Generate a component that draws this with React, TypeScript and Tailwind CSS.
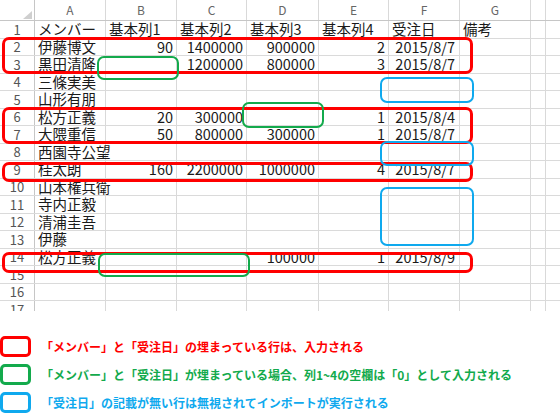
import React from 'react';

const COLS = ['A', 'B', 'C', 'D', 'E', 'F', 'G', ''];
// px widths: row header, A..G, partial H
const WIDTHS = ['w-[35px]', 'w-[71px]', 'w-[71px]', 'w-[70px]', 'w-[72px]', 'w-[70px]', 'w-[71px]', 'w-[71px]', 'w-[15px]'];

type Row = string[];

const ROWS: Row[] = [
  ['メンバー', '基本列1', '基本列2', '基本列3', '基本列4', '受注日', '備考'],
  ['伊藤博文', '90', '1400000', '900000', '2', '2015/8/7'],
  ['黒田清隆', '', '1200000', '800000', '3', '2015/8/7'],
  ['三條実美'],
  ['山形有朋'],
  ['松方正義', '20', '300000', '', '1', '2015/8/4'],
  ['大隈重信', '50', '800000', '300000', '1', '2015/8/7'],
  ['西園寺公望'],
  ['桂太朗', '160', '2200000', '1000000', '4', '2015/8/7'],
  ['山本権兵衛'],
  ['寺内正毅'],
  ['清浦圭吾'],
  ['伊藤'],
  ['松方正義', '', '', '100000', '1', '2015/8/9'],
  [],
  [],
  [],
];

// overlays drawn over the sheet: [left, top, width, height, kind]
const BOXES: { cls: string }[] = [
  { cls: 'left-[2px] top-[37px] w-[471px] h-[37px] border-[3px] border-[#ff0000]' },
  { cls: 'left-[2px] top-[107px] w-[471px] h-[37px] border-[3px] border-[#ff0000]' },
  { cls: 'left-[2px] top-[162px] w-[471px] h-[20px] border-[3px] border-[#ff0000]' },
  { cls: 'left-[2px] top-[252px] w-[471px] h-[21px] border-[3px] border-[#ff0000]' },
  { cls: 'left-[97px] top-[56px] w-[82px] h-[24px] border-[2.5px] border-[#13aa4c]' },
  { cls: 'left-[242px] top-[102px] w-[82px] h-[26px] border-[2.5px] border-[#13aa4c]' },
  { cls: 'left-[98px] top-[253px] w-[152px] h-[24px] border-[2.5px] border-[#13aa4c]' },
  { cls: 'left-[380px] top-[77px] w-[94px] h-[26px] border-[2.5px] border-[#0fa9ee]' },
  { cls: 'left-[380px] top-[141px] w-[94px] h-[25px] border-[2.5px] border-[#0fa9ee]' },
  { cls: 'left-[380px] top-[187px] w-[94px] h-[59px] border-[2.5px] border-[#0fa9ee]' },
];

const LEGEND = [
  { box: 'border-[#ff0000]', text: 'text-[#ff0000]', label: '「メンバー」と「受注日」の埋まっている行は、入力される' },
  { box: 'border-[#13aa4c]', text: 'text-[#13aa4c]', label: '「メンバー」と「受注日」が埋まっている場合、列1~4の空欄は「0」として入力される' },
  { box: 'border-[#0fa9ee]', text: 'text-[#0fa9ee]', label: '「受注日」の記載が無い行は無視されてインポートが実行される' },
];

function Cell({ value, col, header }: { value?: string; col: number; header: boolean }) {
  const numeric = !header && col >= 1 && col <= 5;
  return (
    <div
      className={`${WIDTHS[col + 1]} shrink-0 h-full border-r border-[#d9d9d9] px-[3px] flex items-center whitespace-nowrap ${
        numeric ? 'justify-end' : 'justify-start'
      } ${col === 5 && !header ? 'justify-end pr-[4px]' : ''}`}
    >
      {value}
    </div>
  );
}

export default function App() {
  return (
    <div
      className="w-[560px] h-[420px] bg-white relative overflow-hidden"
      style={{ fontFamily: '"Noto Sans CJK JP", "Liberation Sans", sans-serif' }}
    >
      {/* sheet */}
      <div className="h-[311px] overflow-hidden">
        {/* column headers */}
        <div className="flex h-[21px] border-b border-[#c6c6c6] text-[12px] text-[#666]">
          <div className="w-[35px] shrink-0 h-full border-r border-[#c6c6c6] relative">
            <svg className="absolute left-[23px] top-[11px]" width="9" height="8" viewBox="0 0 9 8">
              <polygon points="9,0 9,8 0,8" fill="#cfcfcf" />
            </svg>
          </div>
          {COLS.map((c, i) => (
            <div key={i} className={`${WIDTHS[i + 1]} shrink-0 h-full border-r border-[#d9d9d9] flex items-center justify-center`}>
              {c}
            </div>
          ))}
        </div>
        {ROWS.map((row, r) => (
          <div key={r} className="flex h-[17.5px] border-b border-[#dadada] text-[14.5px] text-[#1a1a1a] leading-none">
            <div className="w-[35px] shrink-0 h-full border-r border-[#c6c6c6] flex items-center justify-center text-[13px] text-[#555]">
              {r + 1}
            </div>
            {COLS.map((_, i) => (
              <Cell key={i} col={i} value={row[i]} header={r === 0} />
            ))}
          </div>
        ))}
      </div>

      {BOXES.map((b, i) => (
        <div key={i} className={`absolute rounded-[7px] ${b.cls}`} />
      ))}

      {/* legend */}
      <div className="absolute left-0 top-[336px] flex flex-col gap-[7px]">
        {LEGEND.map((l, i) => (
          <div key={i} className="flex items-center gap-[10px] h-[21px]">
            <div className={`w-[31px] h-[21px] rounded-[5px] border-[3px] ${l.box}`} />
            <span className={`text-[12px] font-bold whitespace-nowrap ${l.text}`}>{l.label}</span>
          </div>
        ))}
      </div>
    </div>
  );
}
